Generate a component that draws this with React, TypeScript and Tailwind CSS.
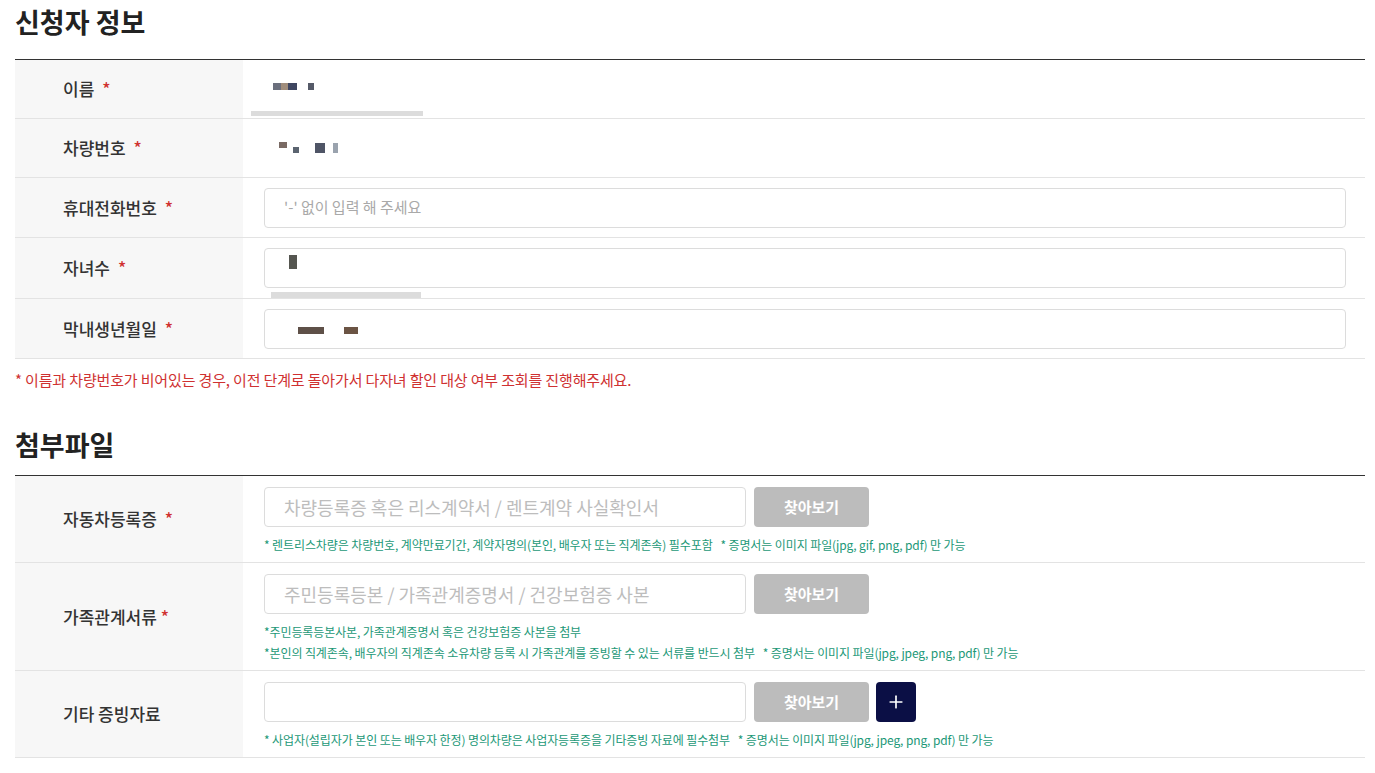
import { Plus } from 'lucide-react';

const font = { fontFamily: '"Noto Sans CJK KR", "Noto Sans", sans-serif' };

function Label({ text, required = true, gap = 8 }: { text: string; required?: boolean; gap?: number }) {
  return (
    <div className="w-[228px] shrink-0 bg-[#f7f7f7] pl-[48px] flex items-center text-[17px] font-medium text-[#333]">
      {text}
      {required && (
        <span className="text-[#d0312f]" style={{ marginLeft: gap }}>
          *
        </span>
      )}
    </div>
  );
}

// pixelated blocks standing in for redacted values
function Blur({ blocks }: { blocks: { w: number; h: number; c: string; ml: number; mt?: number }[] }) {
  return (
    <div className="flex items-center">
      {blocks.map((b, i) => (
        <span
          key={i}
          className="inline-block"
          style={{ width: b.w, height: b.h, background: b.c, marginLeft: b.ml, marginTop: b.mt ?? 0 }}
        />
      ))}
    </div>
  );
}

function FindButton() {
  return (
    <button className="w-[115px] h-[40px] rounded-[4px] bg-[#bcbcbc] text-white text-[15px] font-bold shrink-0">
      찾아보기
    </button>
  );
}

function FileRow({
  label,
  placeholder,
  notes,
  plus,
  required = true,
  gap,
}: {
  label: string;
  placeholder: string;
  notes: string[];
  plus?: boolean;
  required?: boolean;
  gap?: number;
}) {
  return (
    <div className="flex border-b border-[#e3e3e3]">
      <Label text={label} required={required} gap={gap} />
      <div className="flex-1 pl-[21px] pt-[11px] pb-[7px]">
        <div className="flex items-center gap-[8px]">
          <div className="w-[482px] h-[40px] rounded-[4px] border border-[#dcdcdc] px-[19px] flex items-center text-[18px] text-[#bdbdbd]">
            {placeholder}
          </div>
          <FindButton />
          {plus && (
            <button className="w-[40px] h-[40px] ml-[-1px] rounded-[4px] bg-[#0b0f45] text-white flex items-center justify-center">
              <Plus className="w-[20px] h-[20px]" strokeWidth={2} />
            </button>
          )}
        </div>
        <div className="mt-[7px]">
          {notes.map((n, i) => (
            <p key={i} className="text-[12px] leading-[21px] text-[#1c9877] tracking-[-0.1px] whitespace-pre">
              {n}
            </p>
          ))}
        </div>
      </div>
    </div>
  );
}

export default function App() {
  return (
    <div className="min-h-screen bg-white px-[15px] pt-[4px]" style={font}>
      <h2 className="text-[27px] leading-[36px] font-bold text-[#222] mb-[19px]">신청자 정보</h2>

      <div className="border-t border-[#333] w-[1350px]">
        {/* 이름 */}
        <div className="flex h-[59px] border-b border-[#e3e3e3]">
          <Label text="이름" />
          <div className="flex-1 relative pl-[21px] flex items-center">
            <Blur
              blocks={[
                { w: 8, h: 7, c: '#6b6f7d', ml: 9, mt: -6 },
                { w: 7, h: 7, c: '#a08d7c', ml: 0, mt: -6 },
                { w: 9, h: 7, c: '#3f4661', ml: 0, mt: -6 },
                { w: 6, h: 7, c: '#555a68', ml: 11, mt: -6 },
              ]}
            />
            <span className="absolute left-[8px] top-[51px] w-[172px] h-[5px] bg-[#dcdcdc]" />
          </div>
        </div>

        {/* 차량번호 */}
        <div className="flex h-[59px] border-b border-[#e3e3e3]">
          <Label text="차량번호" />
          <div className="flex-1 pl-[21px] flex items-center">
            <Blur
              blocks={[
                { w: 8, h: 6, c: '#7a6a64', ml: 15, mt: -6 },
                { w: 6, h: 6, c: '#5b6470', ml: 6, mt: 4 },
                { w: 10, h: 10, c: '#4f5566', ml: 16 },
                { w: 5, h: 10, c: '#9aa3ae', ml: 8 },
              ]}
            />
          </div>
        </div>

        {/* 휴대전화번호 */}
        <div className="flex h-[60px] border-b border-[#e3e3e3]">
          <Label text="휴대전화번호" />
          <div className="flex-1 pl-[21px] pr-[19px] flex items-center">
            <div className="w-full h-[40px] rounded-[4px] border border-[#dcdcdc] px-[19px] flex items-center text-[15px] text-[#a9a9a9]">
              &apos;-&apos; 없이 입력 해 주세요
            </div>
          </div>
        </div>

        {/* 자녀수 */}
        <div className="flex h-[61px] border-b border-[#e3e3e3]">
          <Label text="자녀수" />
          <div className="flex-1 relative pl-[21px] pr-[19px] flex items-center">
            <div className="w-full h-[40px] rounded-[4px] border border-[#dcdcdc] px-[24px] flex items-start pt-[6px]">
              <span className="inline-block w-[8px] h-[14px] bg-[#555650]" />
            </div>
            <span className="absolute left-[28px] top-[54px] w-[150px] h-[6px] bg-[#dcdcdc]" />
          </div>
        </div>

        {/* 막내생년월일 */}
        <div className="flex h-[60px] border-b border-[#e3e3e3]">
          <Label text="막내생년월일" />
          <div className="flex-1 pl-[21px] pr-[19px] flex items-center">
            <div className="w-full h-[40px] rounded-[4px] border border-[#dcdcdc] px-[24px] flex items-center">
              <Blur
                blocks={[
                  { w: 26, h: 7, c: '#5e5048', ml: 9, mt: 4 },
                  { w: 14, h: 7, c: '#6b5444', ml: 20, mt: 4 },
                ]}
              />
            </div>
          </div>
        </div>
      </div>

      <p className="mt-[11px] text-[15px] leading-[20px] text-[#cf3131] tracking-[-0.15px]">
        * 이름과 차량번호가 비어있는 경우, 이전 단계로 돌아가서 다자녀 할인 대상 여부 조회를 진행해주세요.
      </p>

      <h2 className="mt-[37px] text-[27px] leading-[36px] font-bold text-[#222] mb-[12px]">첨부파일</h2>

      <div className="border-t border-[#333] w-[1350px]">
        <FileRow
          label="자동차등록증"
          placeholder="차량등록증 혹은 리스계약서 / 렌트계약 사실확인서"
          notes={[
            '* 렌트리스차량은 차량번호, 계약만료기간, 계약자명의(본인, 배우자 또는 직계존속) 필수포함   * 증명서는 이미지 파일(jpg, gif, png, pdf) 만 가능',
          ]}
        />
        <FileRow
          label="가족관계서류"
          gap={4}
          placeholder="주민등록등본 / 가족관계증명서 / 건강보험증 사본"
          notes={[
            '*주민등록등본사본, 가족관계증명서 혹은 건강보험증 사본을 첨부',
            '*본인의 직계존속, 배우자의 직계존속 소유차량 등록 시 가족관계를 증빙할 수 있는 서류를 반드시 첨부   * 증명서는 이미지 파일(jpg, jpeg, png, pdf) 만 가능',
          ]}
        />
        <FileRow
          label="기타 증빙자료"
          placeholder=""
          required={false}
          plus
          notes={[
            '* 사업자(설립자가 본인 또는 배우자 한정) 명의차량은 사업자등록증을 기타증빙 자료에 필수첨부   * 증명서는 이미지 파일(jpg, jpeg, png, pdf) 만 가능',
          ]}
        />
      </div>
    </div>
  );
}
